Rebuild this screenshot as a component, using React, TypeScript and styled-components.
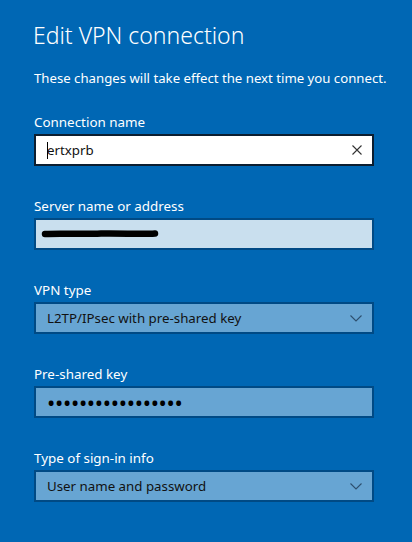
import React from "react";
import styled, { createGlobalStyle } from "styled-components";

const Global = createGlobalStyle`
  html, body { margin: 0; padding: 0; background: #0067b4; }
  body { font-family: "Segoe UI", "Noto Sans", "Open Sans", sans-serif; }
`;

const Page = styled.div`
  width: 412px;
  height: 542px;
  background: #0067b4;
  color: #ffffff;
  padding: 0 0 0 34px;
  box-sizing: border-box;
  overflow: hidden;
`;

const Title = styled.h1`
  margin: 0 0 0 -1px;
  padding-top: 19px;
  font-size: 23px;
  font-weight: 300;
  line-height: 32px;
`;

const Subtitle = styled.p`
  margin: 17px 0 0 0;
  font-size: 13.2px;
  line-height: 20px;
`;

const Group = styled.div<{ $first?: boolean }>`
  display: flex;
  flex-direction: column;
  margin-top: ${(p) => (p.$first ? "24px" : "30px")};
`;

const Label = styled.label`
  font-size: 13.4px;
  line-height: 20px;
  margin-bottom: 2px;
`;

type Variant = "focus" | "light" | "mid";

const Field = styled.div<{ $variant: Variant }>`
  width: 340px;
  height: 32px;
  box-sizing: border-box;
  display: flex;
  align-items: center;
  padding: 0 10px 0 11px;
  border: 2px solid ${(p) => (p.$variant === "focus" ? "#0c1e30" : "#004a85")};
  background: ${(p) =>
    p.$variant === "focus" ? "#ffffff" : p.$variant === "light" ? "#c9dfee" : "#67a5d3"};
  color: #111111;
  font-size: 13.3px;
`;

const Value = styled.span`
  flex: 1;
  white-space: nowrap;
`;

const Caret = styled.span`
  display: inline-block;
  width: 1px;
  height: 17px;
  background: #000;
  margin-right: -1px;
  vertical-align: middle;
`;

const Dots = styled.span`
  flex: 1;
  font-size: 22px;
  line-height: 1;
  letter-spacing: -0.3px;
  color: #000;
  white-space: nowrap;
`;

const Icon = styled.svg`
  flex: none;
  display: block;
`;

const ClearIcon = () => (
  <Icon width="10" height="10" viewBox="0 0 10 10">
    <path d="M0.5 0.5 L9.5 9.5 M9.5 0.5 L0.5 9.5" stroke="#333" strokeWidth="1.1" fill="none" />
  </Icon>
);

const Chevron = () => (
  <Icon width="12" height="7" viewBox="0 0 12 7">
    <path d="M0.5 0.5 L6 6 L11.5 0.5" stroke="#2d4f6e" strokeWidth="1.1" fill="none" />
  </Icon>
);

const Redaction = () => (
  <Icon width="118" height="12" viewBox="0 0 118 12">
    <path
      d="M4 6 C20 5, 40 6.5, 60 5.5 C80 5, 100 6.5, 114 5.5"
      stroke="#000"
      strokeWidth="6.5"
      strokeLinecap="round"
      fill="none"
    />
  </Icon>
);

export default function App() {
  return (
    <Page>
      <Global />
      <Title>Edit VPN connection</Title>
      <Subtitle>These changes will take effect the next time you connect.</Subtitle>

      <Group $first>
        <Label>Connection name</Label>
        <Field $variant="focus">
          <Value>
            <Caret />
            ertxprb
          </Value>
          <ClearIcon />
        </Field>
      </Group>

      <Group>
        <Label>Server name or address</Label>
        <Field $variant="light" style={{ paddingLeft: 5 }}>
          <Redaction />
        </Field>
      </Group>

      <Group>
        <Label>VPN type</Label>
        <Field $variant="mid">
          <Value>L2TP/IPsec with pre-shared key</Value>
          <Chevron />
        </Field>
      </Group>

      <Group>
        <Label>Pre-shared key</Label>
        <Field $variant="mid">
          <Dots>•••••••••••••••••</Dots>
        </Field>
      </Group>

      <Group>
        <Label>Type of sign-in info</Label>
        <Field $variant="mid">
          <Value>User name and password</Value>
          <Chevron />
        </Field>
      </Group>
    </Page>
  );
}
